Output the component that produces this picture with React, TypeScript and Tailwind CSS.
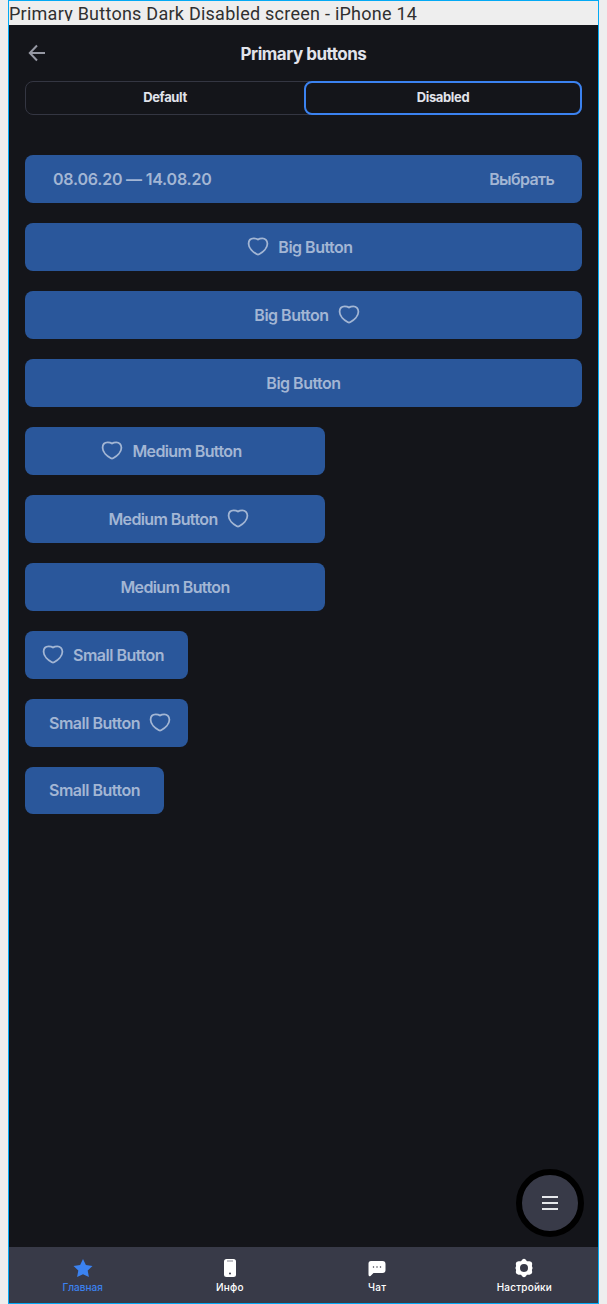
import type { ReactNode } from 'react';

function Heart() {
  return (
    <svg className="size-6 shrink-0" viewBox="0 0 24 24" fill="none" stroke="currentColor" strokeWidth="1.8" strokeLinejoin="round" strokeLinecap="round">
      <path d="M12 4.5C10.8 3.6 9.3 3.3 7.7 3.3C4.7 3.3 2.6 5.4 2.6 8.7C2.6 13 7.2 17.2 10.9 19.2C11.7 19.6 12.3 19.6 13.1 19.2C16.8 17.2 21.4 13 21.4 8.7C21.4 5.4 19.3 3.3 16.3 3.3C14.7 3.3 13.2 3.6 12 4.5Z" />
    </svg>
  );
}

type ButtonProps = { label: string; icon?: 'left' | 'right'; size: 'big' | 'medium' | 'small' };

const widths = {
  big: 'w-full tracking-[-0.5px]',
  medium: 'w-[300px] tracking-[-0.61px]',
  small: 'w-fit tracking-[-0.5px]',
};

function PrimaryButton({ label, icon, size }: ButtonProps) {
  const padding = icon === 'left' ? 'pl-4 pr-6' : icon === 'right' ? 'pl-6 pr-4' : 'px-6';
  const height = size === 'small' && !icon ? 'h-[47px] pb-px' : 'h-12';
  return (
    <button
      disabled
      className={`flex items-center justify-center gap-2 rounded-lg bg-[#2a579b] text-base font-semibold whitespace-nowrap text-[#a3b6d4] ${widths[size]} ${padding} ${height}`}
    >
      {icon === 'left' && <Heart />}
      <span>{label}</span>
      {icon === 'right' && <Heart />}
    </button>
  );
}

function Tab({ label, active, children }: { label: string; active?: boolean; children: ReactNode }) {
  return (
    <div className={`flex flex-1 flex-col items-center ${active ? 'text-[#3b82f0]' : 'text-[#ffffff]'}`}>
      <svg className="mt-[11px] size-5" viewBox="0 0 20 20" fill="currentColor">{children}</svg>
      <span className={`mt-[3px] text-[10px] leading-3 font-medium ${active ? 'tracking-[0px]' : 'tracking-[0.2px]'}`}>{label}</span>
    </div>
  );
}

export default function App() {
  return (
    <div className="flex h-[1304px] w-[607px] bg-[#eeeeee] pr-2 pl-2 font-[Inter,sans-serif]">
      <div className="relative flex w-[591px] flex-col border border-[#03a9f4] bg-[#14151a]">
        <div className="h-6 shrink-0 bg-[#eeeeee]">
          <div className="h-[20px] overflow-hidden pt-[2px] font-[Roboto,sans-serif] text-[18px] leading-[21px] tracking-[0.25px] whitespace-nowrap text-[#303030]">
            Primary Buttons Dark Disabled screen - iPhone 14
          </div>
        </div>

        <header className="grid h-14 shrink-0 grid-cols-[1fr_auto_1fr] items-center px-4">
          <svg className="size-6" viewBox="0 0 24 24" fill="none" stroke="#9698a3" strokeWidth="2">
            <path d="M20 12H5.5M12 4.5L4.8 12L12 19.5" />
          </svg>
          <h1 className="pt-[2px] text-[17px] leading-6 font-bold tracking-[-0.48px] text-[#e1e3eb]">Primary buttons</h1>
        </header>

        <div className="mx-4 flex h-[34px] shrink-0 rounded-lg border border-[#343642] text-[13px] leading-4 font-bold tracking-[-0.35px] text-[#e1e3eb]">
          <div className="flex flex-1 items-center justify-center pb-0.5">Default</div>
          <div className="-my-px -mr-px flex w-[278px] items-center justify-center rounded-lg border-2 border-[#3b82f0] pb-0.5">Disabled</div>
        </div>

        <main className="mx-4 mt-10 flex flex-col gap-5">
          <div className="flex h-12 items-center justify-between rounded-lg bg-[#2a579b] px-7 text-base font-semibold text-[#a3b6d4]">
            <span className="tracking-[-0.22px]">08.06.20 — 14.08.20</span>
            <span className="tracking-[-0.65px]">Выбрать</span>
          </div>
          <PrimaryButton size="big" label="Big Button" icon="left" />
          <PrimaryButton size="big" label="Big Button" icon="right" />
          <PrimaryButton size="big" label="Big Button" />
          <PrimaryButton size="medium" label="Medium Button" icon="left" />
          <PrimaryButton size="medium" label="Medium Button" icon="right" />
          <PrimaryButton size="medium" label="Medium Button" />
          <PrimaryButton size="small" label="Small Button" icon="left" />
          <PrimaryButton size="small" label="Small Button" icon="right" />
          <PrimaryButton size="small" label="Small Button" />
        </main>

        <button className="absolute right-[14px] bottom-[66px] flex size-[68px] items-center justify-center rounded-full border-6 border-black bg-[#383a48]">
          <svg className="h-4 w-4" viewBox="0 0 16 16" stroke="#e6e8ec" strokeWidth="1.8">
            <path d="M0 2H16M0 8H16M0 14H16" />
          </svg>
        </button>

        <nav className="mt-auto flex h-14 shrink-0 bg-[#383a48]">
          <Tab label="Главная" active>
            <path d="M10 1L12.9 7L19.5 7.9L14.7 12.5L15.9 19L10 16.3L4.1 19L5.3 12.5L.5 7.9L7.1 7Z" strokeLinejoin="round" />
          </Tab>
          <Tab label="Инфо">
            <rect x="4" y="1" width="12" height="18" rx="2.5" />
            <path d="M7 3H13" stroke="#999aa4" strokeWidth="1.2" />
            <circle cx="10" cy="15.5" r="1" fill="#383a48" />
          </Tab>
          <Tab label="Чат">
            <path d="M4 3H15.5Q18.5 3 18.5 6V12Q18.5 15 15.5 15H6.5L3.5 18Q1.5 19 1.5 16.5V5.5Q1.5 3 4 3Z" />
            <g fill="#383a48"><circle cx="6.5" cy="9" r=".75" /><circle cx="10" cy="9" r=".75" /><circle cx="13.5" cy="9" r=".75" /></g>
          </Tab>
          <Tab label="Настройки">
            <path fillRule="evenodd" d="M8.4 1.5Q10 .2 11.6 1.5L13 3.2L15.5 3.3Q18.3 3.8 18.2 5.9L17.9 8L18.6 10L17.9 12L18.2 14.1Q18.3 16.2 15.5 16.7L13 16.8L11.6 18.5Q10 19.8 8.4 18.5L7 16.8L4.5 16.7Q1.7 16.2 1.8 14.1L2.1 12L1.4 10L2.1 8L1.8 5.9Q1.7 3.8 4.5 3.3L7 3.2ZM10 6A4 4 0 1 0 10 14A4 4 0 1 0 10 6Z" />
          </Tab>
        </nav>
      </div>
    </div>
  );
}
